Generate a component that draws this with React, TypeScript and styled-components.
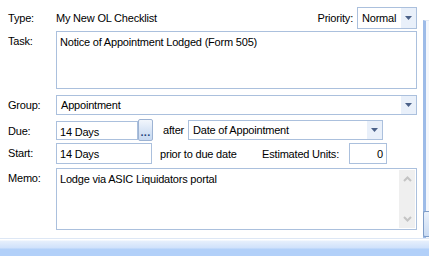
import React from "react";
import styled, { createGlobalStyle } from "styled-components";

const Global = createGlobalStyle`
  html, body { margin: 0; padding: 0; background: #ffffff; }
  body { font-family: Tahoma, "Liberation Sans", "DejaVu Sans", sans-serif; font-size: 11px; letter-spacing: -0.2px; color: #000; }
`;

const Screen = styled.div`
  width: 429px;
  height: 256px;
  display: grid;
  grid-template-columns: 1fr 9px;
  grid-template-rows: 1fr 18px;
  overflow: hidden;
  background: #fff;
`;

const Form = styled.div`
  padding: 7px 3px 0 8px;
  display: grid;
  grid-template-columns: 48px 1fr;
  grid-auto-rows: auto;
  align-items: start;
  align-content: start;
`;

const Label = styled.div<{ $top?: number; $mt?: number }>`
  margin-top: ${(p) => (p.$mt ?? 0) + (p.$top ?? 0)}px;
  line-height: 14px;
  white-space: nowrap;
`;

const Field = styled.div<{ $mt?: number }>`
  margin-top: ${(p) => p.$mt ?? 0}px;
  display: flex;
  align-items: center;
  min-width: 0;
`;

const Plain = styled.span<{ $ml?: number; $mr?: number }>`
  margin-left: ${(p) => p.$ml ?? 0}px;
  margin-right: ${(p) => p.$mr ?? 0}px;
  white-space: nowrap;
  line-height: 14px;
`;

const Spacer = styled.div`
  flex: 1;
`;

const Box = styled.div<{ $w?: number; $h: number; $align?: string; $mr?: number }>`
  box-sizing: border-box;
  ${(p) => (p.$w ? `width: ${p.$w}px; flex: none;` : "flex: 1;")}
  height: ${(p) => p.$h}px;
  margin-right: ${(p) => p.$mr ?? 0}px;
  border: 1px solid #abc0dd;
  background: #fff;
  display: flex;
  align-items: flex-start;
  padding: 3px 3px 0 3px;
  justify-content: ${(p) => (p.$align === "right" ? "flex-end" : "flex-start")};
  line-height: 14px;
  white-space: nowrap;
  position: relative;
`;

const Combo = styled.div<{ $w?: number; $h: number; $ml?: number }>`
  box-sizing: border-box;
  ${(p) => (p.$w ? `width: ${p.$w}px; flex: none;` : "flex: 1;")}
  height: ${(p) => p.$h}px;
  margin-left: ${(p) => p.$ml ?? 0}px;
  border: 1px solid #abc0dd;
  background: #fff;
  display: flex;
  align-items: stretch;
`;

const ComboText = styled.div`
  flex: 1;
  padding-left: 4px;
  display: flex;
  align-items: center;
  white-space: nowrap;
`;

const DropBtn = styled.div`
  width: 15px;
  background: #e9f0fa;
  display: flex;
  align-items: center;
  justify-content: center;
`;

const Arrow = () => (
  <svg width="7" height="4" viewBox="0 0 7 4">
    <path d="M0 0H7L3.5 4Z" fill="#4b6189" />
  </svg>
);

const Ellipsis = styled.div`
  box-sizing: border-box;
  width: 15px;
  height: 22px;
  flex: none;
  border: 1px solid #9db3d3;
  border-radius: 2px;
  background: linear-gradient(#f2f6fc, #d9e5f6 50%, #c8d9f1);
  display: flex;
  align-items: flex-end;
  justify-content: center;
  padding-bottom: 4px;
  color: #25467c;
  font-size: 11px;
  line-height: 8px;
  font-weight: bold;
  letter-spacing: 0.3px;
`;

const ScrollBar = styled.div`
  position: absolute;
  right: 1px;
  top: 1px;
  bottom: 1px;
  width: 16px;
  background: #efefef;
  display: flex;
  flex-direction: column;
  justify-content: space-between;
  align-items: center;
  padding: 6px 0;
  box-sizing: border-box;
`;

const Chevron = ({ up }: { up?: boolean }) => (
  <svg width="9" height="6" viewBox="0 0 9 6">
    <path
      d={up ? "M1 5L4.5 1.5L8 5" : "M1 1L4.5 4.5L8 1"}
      stroke="#c4c4c4"
      strokeWidth="2"
      fill="none"
    />
  </svg>
);

const RightStrip = styled.div`
  display: flex;
  flex-direction: column;
  padding-top: 20px;
  padding-left: 3px;
`;

const StripPanel = styled.div`
  flex: 1;
  border-left: 3px solid #9dbbe8;
  border-top: 1px solid #dfe8f5;
  background: #f4f7fc;
  display: flex;
  flex-direction: column;
  justify-content: flex-end;
`;

const StripBtn = styled.div`
  height: 24px;
  margin-bottom: 1px;
  margin-left: -3px;
  border: 1px solid #7f9dc8;
  border-right: none;
  border-radius: 2px 0 0 2px;
  background: linear-gradient(#eaf1fb, #c9dbf3);
`;

const BottomBar = styled.div`
  grid-column: 1 / span 2;
  border-top: 1px solid #dde7f5;
  background: linear-gradient(#ffffff 0px, #ffffff 1px, #e6effc 2px, #cfe1fb 9px, #b2d0f9 10px, #b2d0f9 100%);
`;

export default function App() {
  return (
    <>
      <Global />
      <Screen>
        <Form>
          <Label $top={4}>Type:</Label>
          <Field>
            <Plain>My New OL Checklist</Plain>
            <Spacer />
            <Plain>Priority:</Plain>
            <Combo $w={60} $h={22} $ml={4}>
              <ComboText>Normal</ComboText>
              <DropBtn>
                <Arrow />
              </DropBtn>
            </Combo>
          </Field>

          <Label $mt={2} $top={3}>Task:</Label>
          <Field $mt={2}>
            <Box $h={58}>Notice of Appointment Lodged (Form 505)</Box>
          </Field>

          <Label $mt={6} $top={3}>Group:</Label>
          <Field $mt={6}>
            <Combo $h={20}>
              <ComboText>Appointment</ComboText>
              <DropBtn>
                <Arrow />
              </DropBtn>
            </Combo>
          </Field>

          <Label $mt={4} $top={5}>Due:</Label>
          <Field $mt={4}>
            <Box $w={82} $h={19}>14 Days</Box>
            <Ellipsis>...</Ellipsis>
            <Plain $ml={10}>after</Plain>
            <Combo $w={195} $h={20} $ml={4}>
              <ComboText>Date of Appointment</ComboText>
              <DropBtn>
                <Arrow />
              </DropBtn>
            </Combo>
          </Field>

          <Label $mt={2} $top={3}>Start:</Label>
          <Field $mt={2}>
            <Box $w={96} $h={21}>14 Days</Box>
            <Plain $ml={8}>prior to due date</Plain>
            <Spacer />
            <Plain $mr={10}>Estimated Units:</Plain>
            <Box $w={38} $h={21} $align="right" $mr={30}>0</Box>
          </Field>

          <Label $mt={4} $top={3}>Memo:</Label>
          <Field $mt={4}>
            <Box $h={62}>
              Lodge via ASIC Liquidators portal
              <ScrollBar>
                <Chevron up />
                <Chevron />
              </ScrollBar>
            </Box>
          </Field>
        </Form>
        <RightStrip>
          <StripPanel>
            <StripBtn />
          </StripPanel>
        </RightStrip>
        <BottomBar />
      </Screen>
    </>
  );
}
